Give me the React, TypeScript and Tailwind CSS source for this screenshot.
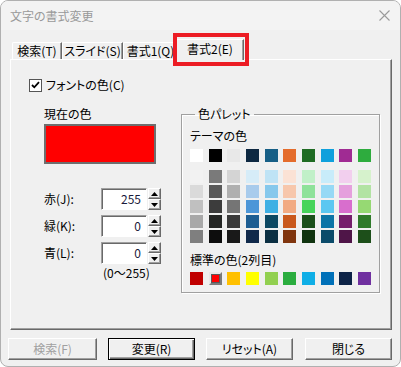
import React from 'react'

const theme: string[][] = [
  ['#ffffff', '#f2f2f2', '#dadada', '#c0c0c0', '#a8a8a8', '#7f7f7f'],
  ['#000000', '#7a7a7a', '#595959', '#3c3c3c', '#242624', '#0d0d0d'],
  ['#e8e8e8', '#d4d4d4', '#afafaf', '#757575', '#3a3a3a', '#191919'],
  ['#0e2841', '#d6ecf8', '#a8cbec', '#4c96d8', '#1d5d92', '#10294a'],
  ['#175f86', '#bfe3f5', '#86c8ec', '#3fb0e4', '#0d4862', '#0b2f42'],
  ['#e46c2c', '#fbe2d5', '#f7c7ac', '#f2aa82', '#c9581c', '#80350e'],
  ['#1f6b23', '#c1f0c8', '#8fe29a', '#47d45a', '#1a4f1a', '#10330f'],
  ['#0fa0dc', '#c8ecfa', '#96d9f5', '#5cc7f1', '#0c74a6', '#0b4b6a'],
  ['#a02b93', '#f2cfee', '#e5a0dd', '#d86ecd', '#751f6b', '#4f1548'],
  ['#2eac3e', '#d6f2cc', '#b2e3a3', '#96d973', '#2f7a2a', '#1d4f1a'],
]

const standard = ['#c00000', '#ff0000', '#ffc000', '#ffff00', '#92d050', '#2bad3f', '#0faee6', '#0070b8', '#0d2347', '#7030a0']

const raised =
  'border border-t-white border-l-white border-r-[#696969] border-b-[#696969] shadow-[inset_-1px_-1px_0_#a0a0a0]'
const sunken =
  'border border-t-[#a0a0a0] border-l-[#a0a0a0] border-r-white border-b-white shadow-[inset_1px_1px_0_#696969]'

function Swatch({ c }: { c: string }) {
  return <div className="w-[13px] h-[13px]" style={{ backgroundColor: c }} />
}

function Arrow({ up }: { up?: boolean }) {
  return (
    <svg width="7" height="4" viewBox="0 0 7 4">
      <path d={up ? 'M3.5 0 L7 4 L0 4Z' : 'M0 0 L7 0 L3.5 4Z'} fill="#000" />
    </svg>
  )
}

function Spinner({ label, value }: { label: string; value: string }) {
  return (
    <div className="flex items-center h-[22px]">
      <span className="w-[57px]">{label}</span>
      <div className={`w-[46px] h-[22px] bg-white flex items-center justify-end pr-[5px] text-[#1a1a3a] ${sunken}`}>
        {value}
      </div>
      <div className="flex flex-col ml-px w-[13px] h-[22px]">
        <div className={`h-[11px] flex items-center justify-center ${raised}`}>
          <Arrow up />
        </div>
        <div className={`h-[11px] flex items-center justify-center ${raised}`}>
          <Arrow />
        </div>
      </div>
    </div>
  )
}

function Tab({ label, w }: { label: string; w: string }) {
  return (
    <div className={`${w} h-[17px] flex items-center justify-center border-t border-l border-t-white border-l-white border-r border-r-[#696969] shadow-[inset_-1px_0_0_#a0a0a0] rounded-tl-[2px]`}>
      {label}
    </div>
  )
}

export default function App() {
  return (
    <div className="w-[401px] h-[367px] bg-white font-['Noto_Sans_CJK_JP',sans-serif] [font-feature-settings:'palt'] text-[12px] leading-[14px] text-black">
      <div className="w-[401px] h-[367px] flex flex-col rounded-[8px] border border-[#b0b0b0] bg-[#f0f0f0] overflow-hidden">
        {/* title bar */}
        <div className="h-[29px] shrink-0 bg-[#f3f3f3] flex items-center justify-between pl-[9px] pr-[10px]">
          <span className="text-[#999999]">文字の書式変更</span>
          <svg width="11" height="11" viewBox="0 0 11 11">
            <path d="M0.5 0.5 L10.5 10.5 M10.5 0.5 L0.5 10.5" stroke="#9a9a9a" strokeWidth="1.1" />
          </svg>
        </div>

        <div className="flex flex-col pl-[9px] pr-[8px] pt-[9px]">
          {/* tabs */}
          <div className="flex items-end h-[20px] pl-[2px]">
            <Tab label="検索(T)" w="w-[50px]" />
            <Tab label="スライド(S)" w="w-[61px]" />
            <Tab label="書式1(Q)" w="w-[55px]" />
            <div className="relative z-10 -mb-px -ml-[2px] w-[68px] h-[21px] pb-[2px] flex items-center justify-center bg-[#f0f0f0] border-t border-l border-t-white border-l-white border-r border-r-[#696969] shadow-[inset_-1px_0_0_#a0a0a0] rounded-tl-[2px]">
              書式2(E)
              <div className="absolute -left-[4px] -top-[7px] w-[76px] h-[33px] border-[4px] border-[#ec1c24]" />
            </div>
          </div>

          {/* panel */}
          <div className={`h-[271px] pt-[18px] pl-[18px] ${raised}`}>
            <div className="flex items-center gap-[4px] h-[14px]">
              <div className="w-[13px] h-[13px] bg-white border border-[#555] flex items-center justify-center">
                <svg width="9" height="8" viewBox="0 0 9 8">
                  <path d="M1 4 L3.3 6.3 L8 1.2" stroke="#000" strokeWidth="1.8" fill="none" />
                </svg>
              </div>
              <span>フォントの色(C)</span>
            </div>

            <div className="flex items-start mt-[15px]">
              {/* left column */}
              <div className="flex flex-col pl-[15px] w-[152px]">
                <span>現在の色</span>
                <div className="mt-[3px] w-[112px] h-[40px] bg-[#ff0000] border-2 border-[#6e6e6e]" />
                <div className="flex flex-col gap-[5px] mt-[24px]">
                  <Spinner label="赤(J):" value="255" />
                  <Spinner label="緑(K):" value="0" />
                  <Spinner label="青(L):" value="0" />
                </div>
                <span className="mt-[2px] pl-[59px]">(0〜255)</span>
              </div>

              {/* palette group */}
              <fieldset className="w-[199px] border border-[#a0a0a0] shadow-[inset_1px_1px_0_#fff,1px_1px_0_#fff] pl-[8px] pr-[8px] pt-[8px] pb-[7px]">
                <legend className="ml-[5px] px-[3px]">色パレット</legend>
                <div>テーマの色</div>
                <div className="mt-[6px] flex justify-between w-[181px]">
                  {theme.map((col, i) => (
                    <Swatch key={i} c={col[0]} />
                  ))}
                </div>
                <div className="mt-[8px] flex justify-between w-[181px]">
                  {theme.map((col, i) => (
                    <div key={i} className="flex flex-col gap-[2px]">
                      {col.slice(1).map((c, j) => (
                        <Swatch key={j} c={c} />
                      ))}
                    </div>
                  ))}
                </div>
                <div className="mt-[10px]">標準の色(2列目)</div>
                <div className="mt-[5px] flex justify-between w-[181px]">
                  {standard.map((c, i) =>
                    i === 1 ? (
                      <div key={i} className="w-[13px] h-[13px] border-2 border-t-[#e8e8e8] border-l-[#e8e8e8] border-r-[#7a7a7a] border-b-[#7a7a7a] flex">
                        <div className="flex-1 bg-[#ff0000] border border-[#5a5a5a]" />
                      </div>
                    ) : (
                      <Swatch key={i} c={c} />
                    )
                  )}
                </div>
              </fieldset>
            </div>
          </div>

          {/* buttons */}
          <div className="flex mt-[8px] -ml-[2px] gap-[11px]">
            <div className={`w-[89px] h-[22px] flex items-center justify-center text-[#a0a0a0] ${raised}`}>検索(F)</div>
            <div className="w-[87px] h-[22px] flex items-center justify-center border border-black shadow-[inset_1px_1px_0_#fff,inset_-1px_-1px_0_#696969,inset_-2px_-2px_0_#a0a0a0]">変更(R)</div>
            <div className={`w-[87px] h-[22px] flex items-center justify-center ${raised}`}>リセット(A)</div>
            <div className={`w-[87px] h-[22px] ml-px flex items-center justify-center ${raised}`}>閉じる</div>
          </div>
        </div>
      </div>
    </div>
  )
}
